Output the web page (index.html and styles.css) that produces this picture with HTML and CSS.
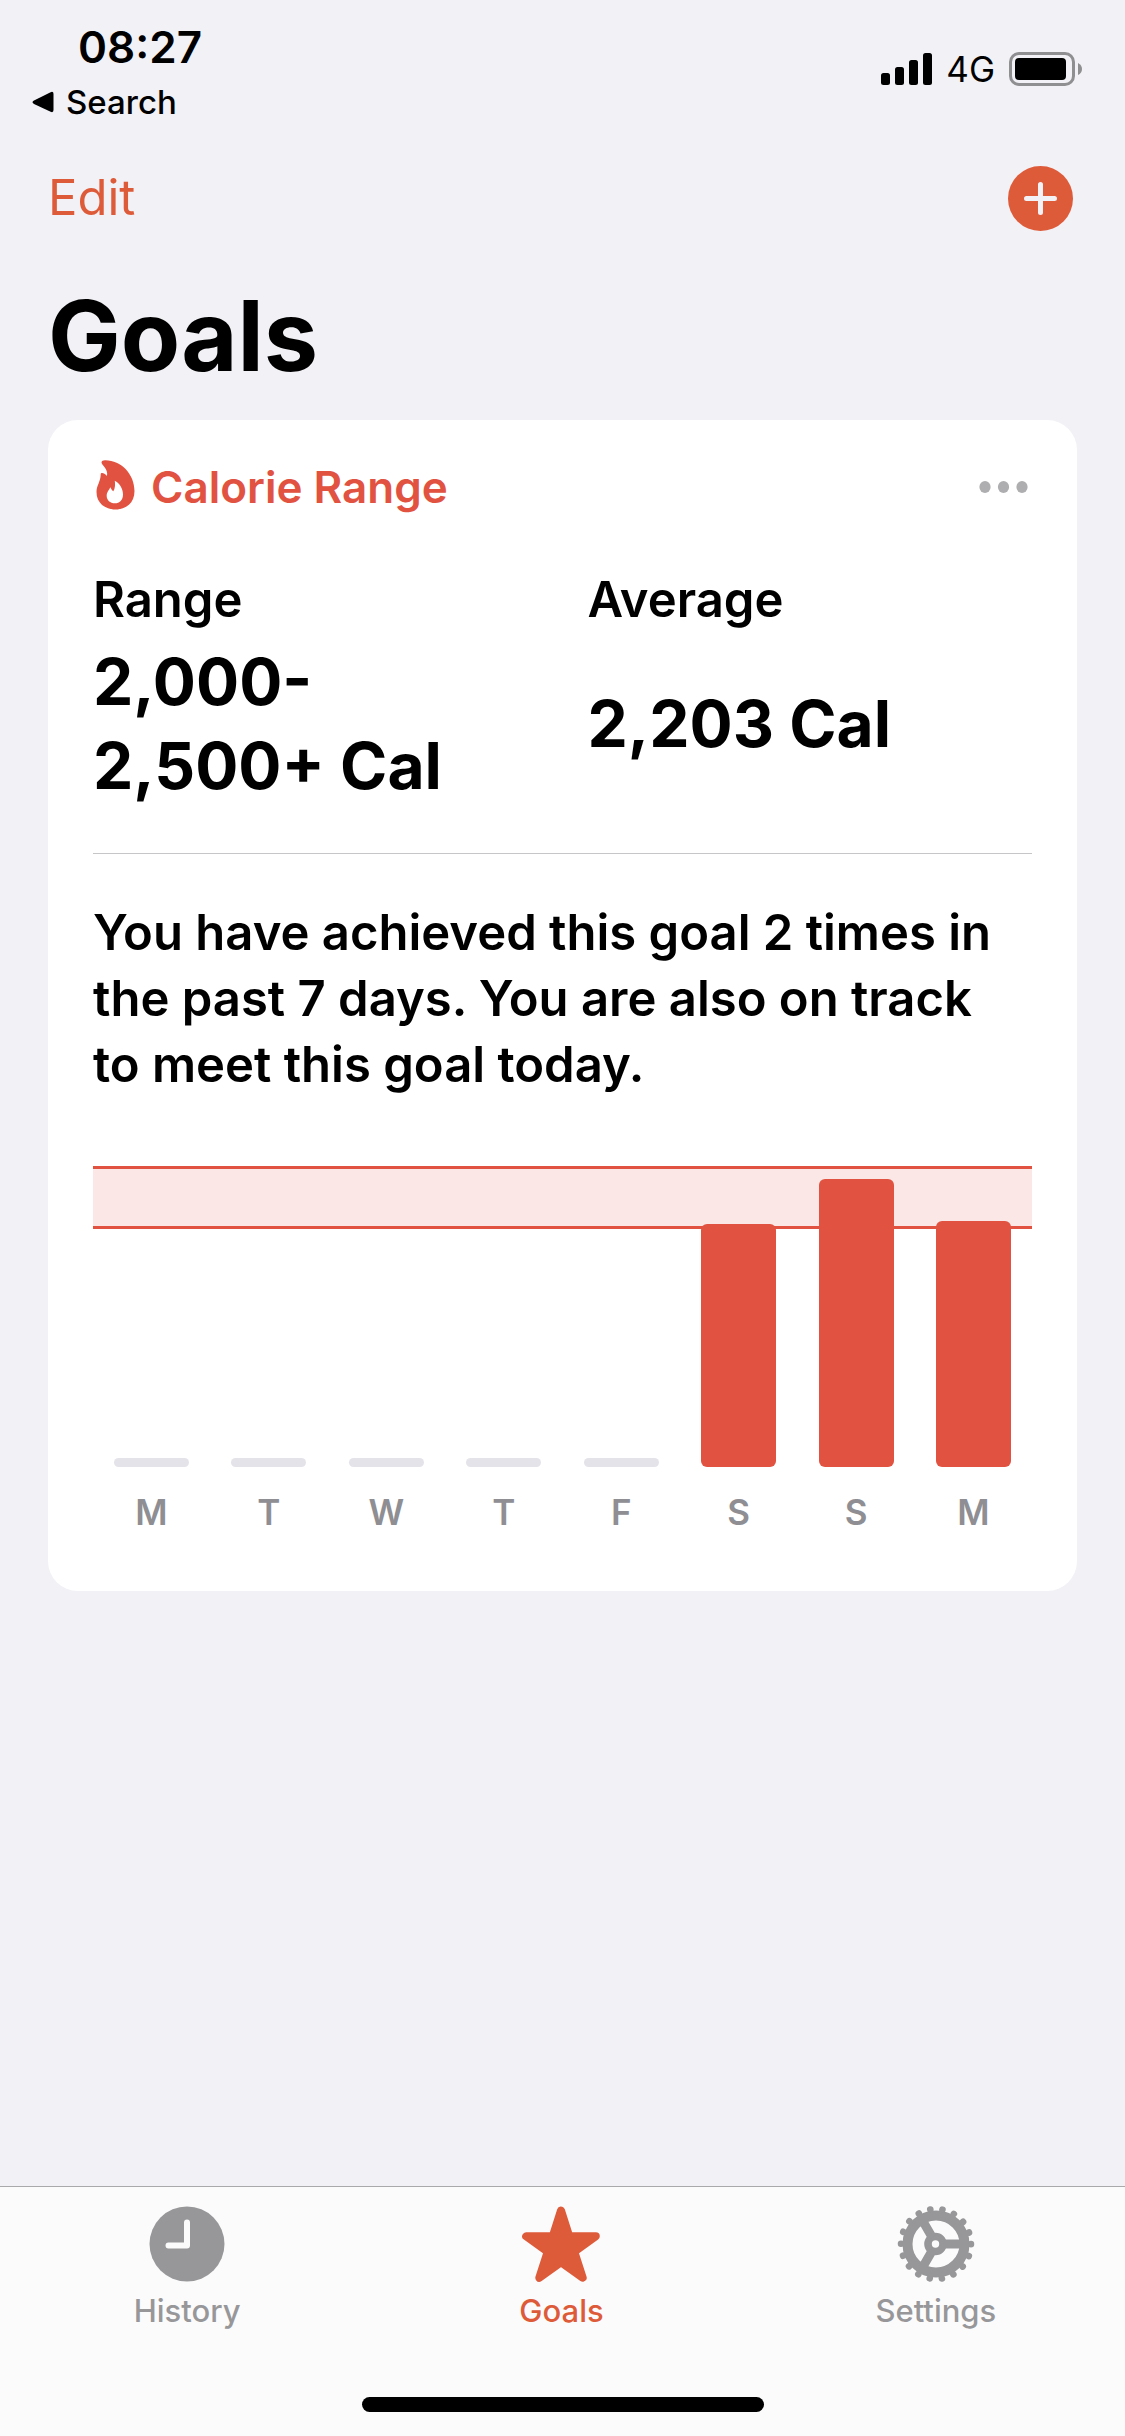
FILE: index.html
```html
<!DOCTYPE html>
<html lang="en">
<head>
<meta charset="utf-8">
<meta name="viewport" content="width=device-width, initial-scale=1">
<title>Goals</title>
<link rel="stylesheet" href="styles.css">
</head>
<body>
<header class="status">
  <div class="status-left">
    <time class="clock">08:27</time>
    <a class="back" href="#search">
      <svg class="back-arrow" viewBox="0 0 22 22" aria-hidden="true"><path d="M2 9.6 18.600 1.200Q21.500 0 21.500 3V19Q21.500 22 18.600 20.800L2 12.900Q-1 11.200 2 9.600Z"/></svg>
      Search
    </a>
  </div>
  <div class="status-right">
    <svg class="signal" viewBox="0 0 51 32" aria-hidden="true"><rect y="20" width="9" height="12" rx="2.500"/><rect x="14" y="14" width="9" height="18" rx="2.500"/><rect x="28" y="7" width="9" height="25" rx="2.500"/><rect x="42" width="9" height="32" rx="2.500"/></svg>
    <span class="network">4G</span>
    <svg class="battery" viewBox="0 0 73 34" aria-hidden="true"><rect x="1.500" y="1.500" width="63" height="31" rx="8.500" fill="none" stroke="#8f8f92" stroke-width="3"/><rect x="6" y="6" width="51" height="22" rx="4"/><path d="M69 11Q73 13 73 17T69 23Z" fill="#8f8f92"/></svg>
  </div>
</header>

<nav class="toolbar">
  <button class="edit" type="button">Edit</button>
  <button class="add" type="button" aria-label="Add goal">
    <svg viewBox="0 0 65 65" aria-hidden="true"><circle cx="32.500" cy="32.500" r="32.500" fill="#de5b3a"/><path d="M18.500 32.500H46.500M32.500 18.500V46.500" stroke="#f2f1f6" stroke-width="5" stroke-linecap="round"/></svg>
  </button>
</nav>

<main class="content">
  <h1 class="title">Goals</h1>
  <article class="card">
    <header class="card-head">
      <svg class="flame" viewBox="0 0 39 50" aria-hidden="true"><path fill-rule="evenodd" d="M9 .2C25 0 38.500 14 38.500 31C38.500 43 30 49.500 19.500 49.500C9 49.500 .5 43 .5 32C.5 25.500 4.500 22 4.700 14.500C4.700 12 8.500 13 11 16C12.500 9 5.500 5 5.500 2.500C5.500 1 7 .2 9 .2ZM18.700 20.700C23.500 23 27 28.500 27 34.500C27 40 23.500 43.300 19 43.300C14 43.300 10.700 40 10.700 36C10.700 32 13.200 30 14.300 27.300C15 28 16 31 17.300 31.300C19 29 19.500 24 18.700 20.700Z"/></svg>
      <h2 class="card-title">Calorie Range</h2>
      <button class="more" type="button" aria-label="More options">
        <svg viewBox="0 0 49 12" aria-hidden="true"><ellipse cx="6" cy="6" rx="5.600" ry="6"/><ellipse cx="24.500" cy="6" rx="5.600" ry="6"/><ellipse cx="43" cy="6" rx="5.600" ry="6"/></svg>
      </button>
    </header>
    <dl class="stats">
      <div class="stat"><dt>Range</dt><dd>2,000-<br>2,500+ Cal</dd></div>
      <div class="stat"><dt>Average</dt><dd>2,203 Cal</dd></div>
    </dl>
    <p class="summary">You have achieved this goal 2 times in the past 7 days. You are also on track to meet this goal today.</p>
    <div class="chart">
      <div class="band"></div>
      <div class="bars">
        <div class="bar empty"></div>
        <div class="bar empty"></div>
        <div class="bar empty"></div>
        <div class="bar empty"></div>
        <div class="bar empty"></div>
        <div class="bar" style="height:80.7%"></div>
        <div class="bar" style="height:95.7%"></div>
        <div class="bar" style="height:81.7%"></div>
      </div>
    </div>
    <div class="days"><span>M</span><span>T</span><span>W</span><span>T</span><span>F</span><span>S</span><span>S</span><span>M</span></div>
  </article>
</main>

<footer class="tabbar">
  <nav class="tabs">
    <a class="tab" href="#history">
      <svg class="tab-icon" viewBox="0 0 78 78" aria-hidden="true"><circle cx="39" cy="39" r="37.500"/><path d="M39 17.500V40.500H20.500" fill="none" stroke="#fbfbfc" stroke-width="6" stroke-linecap="round" stroke-linejoin="round"/></svg>
      History
    </a>
    <a class="tab active" href="#goals" aria-current="page">
      <svg class="tab-icon" viewBox="0 0 78 78" aria-hidden="true"><path stroke="#de5b3a" stroke-width="8" stroke-linejoin="round" d="M39 5.500 47.200 31.300H73.800L52.300 46.700 60.700 72.800 39 57.200 17.300 72.800 25.700 46.700 4.200 31.300H30.800Z"/></svg>
      Goals
    </a>
    <a class="tab" href="#settings">
      <svg class="tab-icon" viewBox="0 0 78 78" aria-hidden="true"><g fill="none" stroke="currentColor"><circle cx="39" cy="39" r="28.500" stroke-width="10"/><circle cx="39" cy="39" r="35" stroke-width="6.500" stroke-linecap="round" stroke-dasharray="0.200 12.017"/><circle cx="38.500" cy="39" r="7.500" stroke-width="7.600"/><path stroke-width="9" d="M47 39H64M35 32.100 26.500 17.300M35 45.900 26.500 60.700"/></g></svg>
      Settings
    </a>
  </nav>
  <div class="home-indicator"></div>
</footer>
</body>
</html>
```

FILE: styles.css
```css
* { box-sizing: border-box; margin: 0; padding: 0; }

body {
  display: flex;
  flex-direction: column;
  min-height: 100vh;
  background: #f2f1f6;
  color: #000;
  font-family: Inter, "Liberation Sans", sans-serif;
}

button { border: 0; background: none; font: inherit; cursor: pointer; }
a { color: inherit; text-decoration: none; }
svg { display: block; }

.status {
  display: flex;
  justify-content: space-between;
  padding: 20px 43px 0 32px;
}
.status-left { display: flex; flex-direction: column; }
.clock {
  padding-left: 46px;
  font-size: 44px;
  line-height: 54px;
  font-weight: 600;
}
.back {
  display: flex;
  align-items: center;
  gap: 12px;
  font-size: 33px;
  line-height: 56px;
  font-weight: 500;
}
.back-arrow { width: 22px; height: 22px; }
.status-right { display: flex; align-items: center; align-self: flex-start; height: 98px; gap: 14px; }
.signal { width: 51px; height: 32px; }
.network { font-size: 35px; line-height: 44px; }
.battery { width: 73px; height: 34px; }

.toolbar {
  display: flex;
  align-items: center;
  justify-content: space-between;
  height: 136px;
  padding: 0 52px 0 48px;
}
.edit { color: #de5b3a; font-size: 49px; line-height: 60px; }
.add svg { width: 65px; height: 65px; }

.content { flex: 1; padding: 0 48px 48px; }
.title {
  padding: 10px 0 24px;
  font-size: 97px;
  line-height: 120px;
  font-weight: 700;
}
.card {
  padding: 34px 45px 57px;
  border-radius: 30px;
  background: #fff;
}
.card-head { display: flex; align-items: center; height: 66px; }
.flame { width: 39px; height: 50px; margin: 0 16px 4px 3px; fill: #e25241; }
.card-title { color: #e25241; font-size: 44px; line-height: 66px; font-weight: 600; }
.more { margin-left: auto; padding: 4px; fill: #aeaeb0; }
.more svg { width: 49px; height: 12px; }

.stats {
  display: grid;
  grid-template-columns: 1fr 1fr;
  gap: 50px;
  padding: 47px 0 45px;
  border-bottom: 1px solid #c6c6c8;
}
.stat { display: flex; flex-direction: column; gap: 7px; }
.stat dt { font-size: 49px; line-height: 66px; font-weight: 600; }
.stat dd {
  display: flex;
  flex-direction: column;
  flex: 1;
  justify-content: center;
  font-size: 64px;
  line-height: 84px;
  font-weight: 700;
}
.summary {
  padding: 46px 30px 68px 0;
  font-size: 49px;
  line-height: 66px;
  font-weight: 600;
}

.chart { position: relative; height: 301px; }
.band {
  position: absolute;
  inset: 0 0 auto;
  height: 63px;
  border: solid #e25241;
  border-width: 3px 0;
  background: #fbe8e6;
}
.bars {
  position: relative;
  display: flex;
  align-items: flex-end;
  justify-content: space-between;
  height: 100%;
  padding: 0 21px;
}
.bar { width: 75px; border-radius: 6px; background: #e25241; }
.bar.empty { height: 9px; background: #e4e3e9; }
.days {
  display: flex;
  justify-content: space-between;
  padding: 23px 21px 0;
  color: #8e8e93;
  font-size: 35px;
  line-height: 44px;
  font-weight: 600;
}
.days span { width: 75px; text-align: center; }

.tabbar { border-top: 1px solid #a9a9ac; background: #fbfbfc; }
.tabs { display: grid; grid-template-columns: repeat(3, 1fr); padding-right: 2px; }
.tab {
  display: flex;
  flex-direction: column;
  align-items: center;
  gap: 8px;
  padding-top: 18px;
  color: #979799;
  font-size: 31px;
  line-height: 40px;
  font-weight: 500;
}
.tab.active { color: #de5b3a; }
.tab-icon { width: 78px; height: 78px; fill: currentColor; }
.home-indicator {
  width: 402px;
  height: 15px;
  margin: 66px auto 24px;
  border-radius: 8px;
  background: #000;
}
```
